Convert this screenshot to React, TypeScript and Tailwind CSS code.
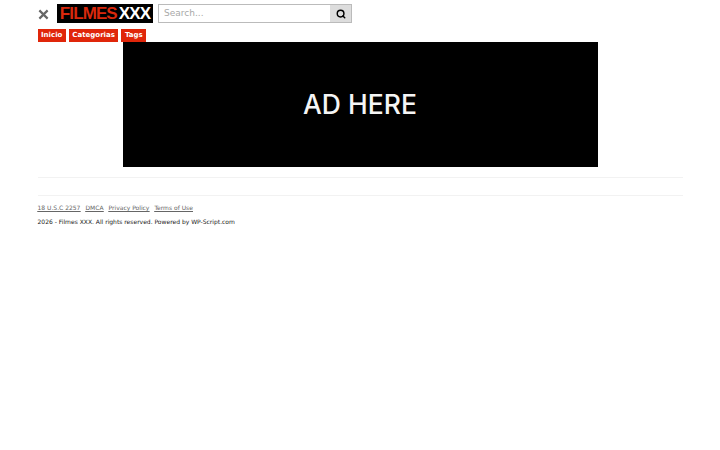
import { Search } from "lucide-react";

const NAV_ITEMS = ["Inicio", "Categorias", "Tags"];
const FOOTER_LINKS = ["18 U.S.C 2257", "DMCA", "Privacy Policy", "Terms of Use"];

export default function App() {
  return (
    <div className="min-h-[450px] bg-white font-['DejaVu_Sans',sans-serif]">
      <div className="mx-[37.5px]">
        <header className="flex items-center pt-[4px]">
          <div className="w-[19.5px] h-[19px] flex items-center pt-[1px]">
            <svg viewBox="0 0 12 12" className="w-[11px] h-[11px]" aria-hidden="true">
              <path d="M1.5 1.5 L10.5 10.5 M10.5 1.5 L1.5 10.5" stroke="#666666" strokeWidth="2.4" fill="none" />
            </svg>
          </div>
          <div className="w-[96px] h-[19px] bg-black flex items-center justify-center font-['Liberation_Sans',sans-serif] font-bold text-[17px] tracking-[-0.9px] leading-none">
            <span className="text-[#d9280c]">FILMES</span>
            <span className="text-white ml-[2px]">XXX</span>
          </div>
          <div className="ml-[5px] w-[194px] h-[19px] flex border border-[#bbbbbb]">
            <div className="flex-1 pl-[5px] text-[9px] leading-[17px] text-[#a8a8a8]">Search...</div>
            <div className="w-[21px] bg-[#dddddd] flex items-center justify-center">
              <Search className="w-[10px] h-[10px] text-black" strokeWidth={3.5} />
            </div>
          </div>
        </header>

        <nav className="flex gap-[3px] mt-[6px] h-[13px]">
          {NAV_ITEMS.map((item) => (
            <a key={item} className="bg-[#e0260a] text-white text-[7px] font-bold leading-[13px] px-[3.5px]">
              {item}
            </a>
          ))}
        </nav>

        <div className="mx-auto w-[475px] h-[125px] bg-black flex items-center justify-center text-[#f5f5f5] font-['Inter',sans-serif] font-medium text-[26.5px]">
          AD HERE
        </div>

        <div className="mt-[10px] border-t border-[#f2f2f2]" />
        <div className="mt-[17px] border-t border-[#f2f2f2]" />

        <div className="mt-[8px] flex gap-[5px] text-[6px] leading-[8px] text-[#666666] underline">
          {FOOTER_LINKS.map((link) => (
            <a key={link}>{link}</a>
          ))}
        </div>
        <p className="mt-[6px] text-[6px] leading-[8px] text-[#222222]">
          2026 - Filmes XXX. All rights reserved. Powered by WP-Script.com
        </p>
      </div>
    </div>
  );
}
